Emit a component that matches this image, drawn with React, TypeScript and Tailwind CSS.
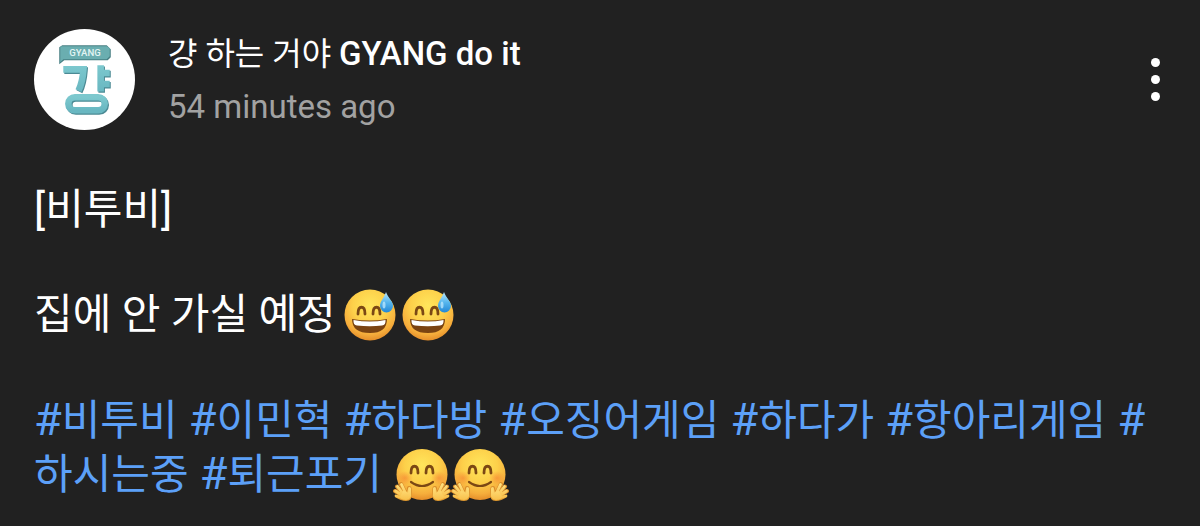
import React from 'react';

function ChannelLogo() {
  return (
    <svg viewBox="0 0 100 100" className="size-full" aria-hidden="true">
      <defs>
        <linearGradient id="teal" x1="0" y1="0" x2="0" y2="1">
          <stop offset="0" stopColor="#7cc8ce" />
          <stop offset="1" stopColor="#69b7c1" />
        </linearGradient>
      </defs>
      <circle cx="50" cy="50" r="50" fill="#fff" />
      <path d="M25 18L28 16H72L76 20V28L73 31H30L25 35Z" fill="#477f83" />
      <path d="M27 17H72L75 19V27L72 30H29L26 33V18Z" fill="#6aaeb0" />
      <text x="50.500" y="27" textAnchor="middle" fontSize="9.500" fontWeight="500" fill="#e2f4f3" fontFamily="Roboto, sans-serif">GYANG</text>
      <g fill="none" stroke="#4b8a94" strokeWidth="6.500" transform="translate(1 1.2)">
        <path d="M29 40H49Q48 53 44 61M66 36V62M66 43.500H75M66 54.500H75" />
        <rect x="34" y="67.500" width="36" height="13" rx="6.500" />
      </g>
      <g fill="none" stroke="url(#teal)" strokeWidth="6.500">
        <path d="M29 40H49Q48 53 44 61M66 36V62M66 43.500H75M66 54.500H75" />
        <rect x="34" y="67.500" width="36" height="13" rx="6.500" />
      </g>
    </svg>
  );
}

function EmojiDefs() {
  return (
    <svg className="absolute size-0" aria-hidden="true">
      <defs>
        <radialGradient id="face" cx="0.5" cy="0.32" r="0.68">
          <stop offset="0" stopColor="#ffe65c" />
          <stop offset="0.5" stopColor="#fdd04a" />
          <stop offset="0.82" stopColor="#f6ae3c" />
          <stop offset="1" stopColor="#e58e2a" />
        </radialGradient>
        <radialGradient id="blush">
          <stop offset="0" stopColor="#f5792f" stopOpacity="0.55" />
          <stop offset="1" stopColor="#f5792f" stopOpacity="0" />
        </radialGradient>
        <linearGradient id="drop" x1="0" y1="0" x2="0" y2="1">
          <stop offset="0" stopColor="#b9e6fb" />
          <stop offset="0.5" stopColor="#58b7ee" />
          <stop offset="1" stopColor="#2287d6" />
        </linearGradient>
        <linearGradient id="hand" x1="0" y1="0" x2="0" y2="1">
          <stop offset="0" stopColor="#ffdf7c" />
          <stop offset="1" stopColor="#f8c04b" />
        </linearGradient>
      </defs>
    </svg>
  );
}

function SweatSmile() {
  return (
    <svg viewBox="0 0 58 54" className="-my-2 inline-block h-[54px] w-[58px] align-[-5px]" role="img" aria-label="grinning face with sweat">
      <circle cx="28" cy="27" r="25.5" fill="url(#face)" />
      <path d="M16 26C16 17 23 17 23 26M31 26C31 17 38 17 38 26" fill="none" stroke="#7b4814" strokeWidth="2.8" strokeLinecap="round" />
      <path d="M10 31Q28 34 45 31Q45 45 28 45Q10 45 10 31Z" fill="#7a4312" />
      <path d="M11.500 32Q28 35 43.500 32Q44 37 40 37.500Q28 39 15 37.500Q11 37 11.500 32Z" fill="#fff" />
      <path d="M44 4C46 10 51 13 51 18A6.500 6.500 0 0 1 38 18C38 13 42 10 44 4Z" fill="url(#drop)" />
      <ellipse cx="42" cy="17" rx="1.500" ry="3.500" fill="#c8edff" opacity="0.7" />
    </svg>
  );
}

function Hand() {
  return (
    <g>
      <path d="M10 48L2 43M11 47L4 38.500M13 46L8 36M15 47L16 40" stroke="#d98d2b" strokeWidth="4" strokeLinecap="round" fill="none" />
      <path d="M8 43Q13 41 15 45L16 39Q19 37 19 43Q20 53 13 53Q8 53 2 49Z" fill="#e09a30" />
      <path d="M10 48L2.500 43M11 47L4.500 38.500M13 46L8.500 36.500M10 50L3 48M15 47L16.500 40.500" stroke="url(#hand)" strokeWidth="2.800" strokeLinecap="round" fill="none" />
      <path d="M10 43Q13 43 15 45L17 40Q18 40 18 44Q19 52 13 52Q9 52 7 49Z" fill="url(#hand)" />
    </g>
  );
}

function HuggingFace() {
  return (
    <svg viewBox="0 0 58 54" className="-my-2 inline-block h-[54px] w-[58px] align-[-5px]" role="img" aria-label="hugging face">
      <circle cx="29" cy="26.500" r="25.500" fill="url(#face)" />
      <ellipse cx="12" cy="30" rx="8" ry="7" fill="url(#blush)" />
      <ellipse cx="46" cy="30" rx="8" ry="7" fill="url(#blush)" />
      <path d="M18 25C18 16 25 16 25 25M33 25C33 16 40 16 40 25" fill="none" stroke="#7b4814" strokeWidth="2.800" strokeLinecap="round" />
      <path d="M18 34Q29 42 40 34" fill="none" stroke="#7b4814" strokeWidth="2.200" strokeLinecap="round" />
      <Hand />
      <g transform="translate(58 0) scale(-1 1)">
        <Hand />
      </g>
    </svg>
  );
}

const tags = ['비투비', '이민혁', '하다방', '오징어게임', '하다가', '항아리게임', '하시는중', '퇴근포기'];

export default function App() {
  return (
    <main className="min-h-screen bg-[#212121] px-[34px] pt-7 font-['Roboto','Noto_Sans_CJK_KR',sans-serif] text-white">
      <EmojiDefs />
      <article>
        <header className="flex items-start">
          <a href="#channel" aria-label="걍 하는 거야 GYANG do it" className="mt-px size-[101px] shrink-0">
            <ChannelLogo />
          </a>
          <div className="ml-[33px] grow">
            <h1 className="text-[33px] leading-[52px] font-medium">
              <a href="#channel">
                <span className="text-[32px] font-normal">걍 하는 거야 </span>GYANG do it
              </a>
            </h1>
            <p className="text-[33px] leading-[54px] text-[#a2a2a2]">54 minutes ago</p>
          </div>
          <button type="button" aria-label="More options" className="mt-[30px] flex w-[22px] flex-col items-center gap-2">
            <span className="size-[9px] rounded-full bg-white" />
            <span className="size-[9px] rounded-full bg-white" />
            <span className="size-[9px] rounded-full bg-white" />
          </button>
        </header>
        <div className="mt-[49px] flex flex-col gap-[52px] text-[42px] leading-[53px]">
          <p>[비투비]</p>
          <p>
            집에 안 가실 예정<span className="ml-[6px] whitespace-nowrap"><SweatSmile /><SweatSmile /></span>
          </p>
          <p className="text-[45px] text-[#5ca0f8]">
            {tags.map((tag) => (
              <React.Fragment key={tag}>
                <a href={`#${tag}`}>#<span className="text-[42px]">{tag}</span></a>{' '}
              </React.Fragment>
            ))}
            <span className="whitespace-nowrap"><HuggingFace /><HuggingFace /></span>
          </p>
        </div>
      </article>
    </main>
  );
}
